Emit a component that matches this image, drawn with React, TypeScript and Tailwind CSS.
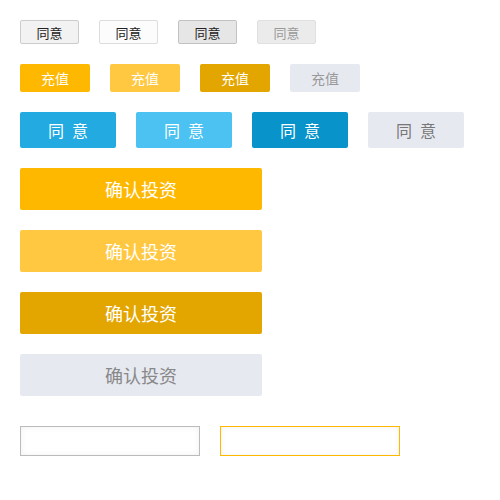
const cjk = "font-['Noto_Sans_CJK_SC',sans-serif]";

export default function App() {
  return (
    <div className={`bg-white w-[500px] h-[500px] px-5 pt-5 ${cjk}`}>
      {/* small grey buttons */}
      <div className="flex gap-5">
        <button className="w-[59px] h-6 rounded-[2px] border border-[#cccccc] bg-[#f2f2f2] text-[13px] text-[#222] leading-none">同意</button>
        <button className="w-[59px] h-6 rounded-[2px] border border-[#dddddd] bg-[#fcfcfc] text-[13px] text-[#222] leading-none">同意</button>
        <button className="w-[59px] h-6 rounded-[2px] border border-[#c2c2c2] bg-[#e6e6e6] text-[13px] text-[#222] leading-none">同意</button>
        <button className="w-[59px] h-6 rounded-[2px] border border-[#e0e0e0] bg-[#ebebeb] text-[13px] text-[#999] leading-none">同意</button>
      </div>

      {/* recharge */}
      <div className="flex gap-5 mt-5">
        <button className="w-[70px] h-7 rounded-[2px] bg-[#ffb800] text-sm text-white leading-none">充值</button>
        <button className="w-[70px] h-7 rounded-[2px] bg-[#ffc840] text-sm text-white leading-none">充值</button>
        <button className="w-[70px] h-7 rounded-[2px] bg-[#e3a600] text-sm text-white leading-none">充值</button>
        <button className="w-[70px] h-7 rounded-[2px] bg-[#e7e9f1] text-sm text-[#999] leading-none">充值</button>
      </div>

      {/* agree */}
      <div className="flex gap-5 mt-5">
        <button className="w-24 h-9 rounded-[2px] bg-[#23aae1] text-base text-white tracking-[8px] pl-2 leading-none">同意</button>
        <button className="w-24 h-9 rounded-[2px] bg-[#4bc2f2] text-base text-white tracking-[8px] pl-2 leading-none">同意</button>
        <button className="w-24 h-9 rounded-[2px] bg-[#0893ca] text-base text-white tracking-[8px] pl-2 leading-none">同意</button>
        <button className="w-24 h-9 rounded-[2px] bg-[#e7e9f1] text-base text-[#777] tracking-[8px] pl-2 leading-none">同意</button>
      </div>

      {/* invest */}
      <div className="flex flex-col gap-5 mt-5">
        <button className="w-[242px] h-[42px] rounded-[2px] bg-[#ffb800] text-lg text-white leading-none">确认投资</button>
        <button className="w-[242px] h-[42px] rounded-[2px] bg-[#ffc840] text-lg text-white leading-none">确认投资</button>
        <button className="w-[242px] h-[42px] rounded-[2px] bg-[#e3a600] text-lg text-white leading-none">确认投资</button>
        <button className="w-[242px] h-[42px] rounded-[2px] bg-[#e7e9f1] text-lg text-[#888] leading-none">确认投资</button>
      </div>

      {/* inputs */}
      <div className="flex gap-5 mt-[30px]">
        <input className="w-[180px] h-[30px] border border-[#bbbbbb] bg-white shadow-[inset_0_0_6px_rgba(0,0,0,0.06)] outline-none" />
        <input className="w-[180px] h-[30px] border border-[#ffb800] bg-white shadow-[inset_0_0_6px_rgba(0,0,0,0.06)] outline-none" />
      </div>
    </div>
  );
}
